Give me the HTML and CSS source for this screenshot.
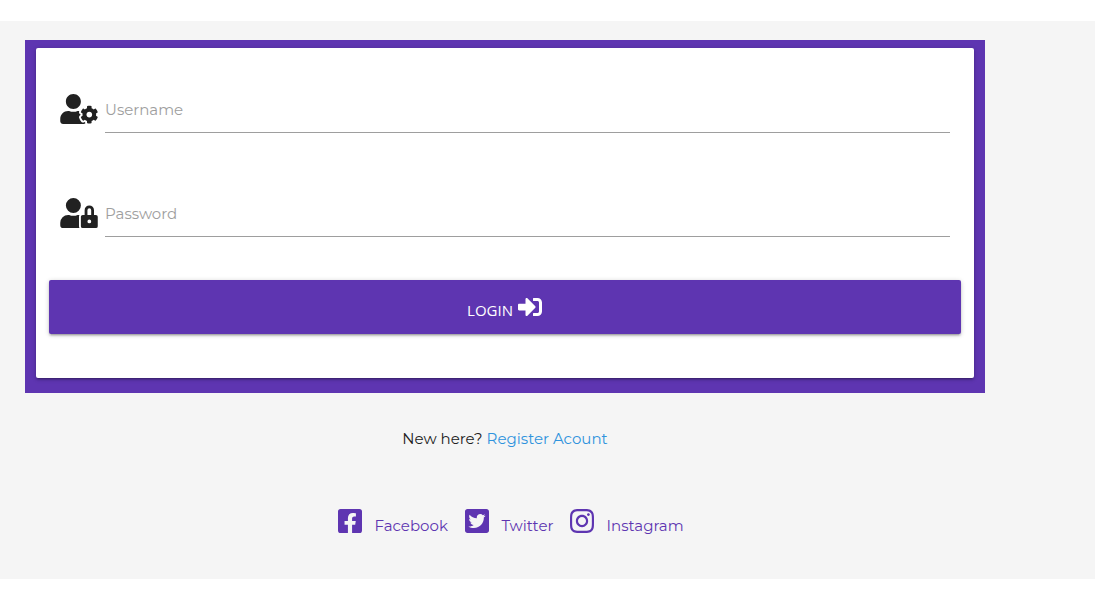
FILE: index.html
```html
<!DOCTYPE html>
<html lang="en">
<head>
<meta charset="utf-8">
<title>Login</title>
<link rel="stylesheet" href="styles.css">
</head>
<body>
<main class="page">
  <div class="content">
    <div class="frame">
      <form class="card">
        <div class="field">
          <svg class="field-icon" viewBox="0 0 640 512"><path d="M610.5 373.3c2.6-14.1 2.6-28.5 0-42.6l25.8-14.9c3-1.7 4.3-5.2 3.3-8.5-6.7-21.6-18.2-41.2-33.2-57.4-2.3-2.5-6-3.1-9-1.4l-25.8 14.9c-10.9-9.3-23.4-16.5-36.9-21.3v-29.8c0-3.4-2.4-6.4-5.7-7.1-22.3-5-45-4.8-66.2 0-3.3.7-5.7 3.7-5.7 7.1v29.8c-13.5 4.8-26 12-36.9 21.3l-25.8-14.9c-2.9-1.7-6.7-1.1-9 1.4-15 16.2-26.5 35.8-33.2 57.4-1 3.3.4 6.8 3.3 8.5l25.8 14.9c-2.6 14.1-2.6 28.5 0 42.6l-25.8 14.9c-3 1.7-4.3 5.2-3.3 8.5 6.7 21.6 18.2 41.1 33.2 57.4 2.3 2.5 6 3.1 9 1.4l25.8-14.9c10.9 9.3 23.4 16.5 36.9 21.3v29.8c0 3.4 2.4 6.4 5.7 7.1 22.3 5 45 4.8 66.2 0 3.3-.7 5.7-3.7 5.7-7.1v-29.8c13.5-4.8 26-12 36.9-21.3l25.8 14.9c2.9 1.7 6.7 1.1 9-1.4 15-16.2 26.5-35.8 33.2-57.4 1-3.3-.4-6.8-3.3-8.5l-25.8-14.9zM496 400.5c-26.8 0-48.5-21.8-48.5-48.5s21.8-48.5 48.5-48.5 48.5 21.8 48.5 48.5-21.7 48.5-48.5 48.5zM224 256c70.7 0 128-57.3 128-128S294.7 0 224 0 96 57.3 96 128s57.3 128 128 128zm201.2 226.5c-2.3-1.2-4.6-2.6-6.8-3.9l-7.9 4.6c-6 3.4-12.8 5.3-19.6 5.3-10.9 0-21.4-4.6-28.9-12.6-18.3-19.8-32.3-43.9-40.2-69.6-5.5-17.7 1.9-36.4 17.9-45.7l7.9-4.6c-.1-2.6-.1-5.2 0-7.8l-7.9-4.6c-16-9.2-23.4-28-17.9-45.7.9-2.9 2.2-5.8 3.2-8.7-3.8-.3-7.5-1.2-11.4-1.2h-16.7c-22.2 10.2-46.9 16-72.9 16s-50.6-5.8-72.9-16h-16.7C60.2 288 0 348.2 0 422.4V464c0 26.5 21.5 48 48 48h352c10.1 0 19.5-3.2 27.2-8.5-1.2-3.8-2-7.7-2-11.8v-9.2z"/></svg>
          <input class="field-input" type="text" placeholder="Username">
        </div>
        <div class="field">
          <svg class="field-icon" viewBox="0 0 640 512"><path d="M224 256A128 128 0 1 0 96 128a128 128 0 0 0 128 128zm96 64a63.08 63.08 0 0 1 8.1-30.5c-4.8-.5-9.5-1.5-14.5-1.5h-16.7a174.08 174.08 0 0 1-145.8 0h-16.7A134.43 134.43 0 0 0 0 422.4V464a48 48 0 0 0 48 48h280.9a63.54 63.54 0 0 1-8.9-32zm288-32h-32v-80a80 80 0 0 0-160 0v80h-32a32 32 0 0 0-32 32v160a32 32 0 0 0 32 32h224a32 32 0 0 0 32-32V320a32 32 0 0 0-32-32zM496 432a32 32 0 1 1 32-32 32 32 0 0 1-32 32zm32-144h-64v-80a32 32 0 0 1 64 0z"/></svg>
          <input class="field-input" type="password" placeholder="Password">
        </div>
        <button class="login" type="button">
          <span class="login-label">LOGIN</span>
          <svg class="login-icon" viewBox="0 0 512 512"><path d="M416 448h-84c-6.6 0-12-5.4-12-12v-40c0-6.6 5.4-12 12-12h84c17.7 0 32-14.3 32-32V160c0-17.7-14.3-32-32-32h-84c-6.6 0-12-5.4-12-12V76c0-6.6 5.4-12 12-12h84c53 0 96 43 96 96v192c0 53-43 96-96 96zm-47-209L201 71c-15-15-41-4.5-41 17v96H24c-13.3 0-24 10.7-24 24v96c0 13.3 10.7 24 24 24h136v96c0 21.5 26 32 41 17l168-168c9.3-9.4 9.3-24.6 0-34z"/></svg>
        </button>
      </form>
    </div>
    <p class="register"><span class="prompt">New here?</span><a class="register-link">Register Acount</a></p>
    <nav class="social">
      <a class="social-link facebook">
        <svg class="social-icon" viewBox="0 32 448 448"><path d="M400 32H48A48 48 0 0 0 0 80v352a48 48 0 0 0 48 48h137.25V327.69h-63V256h63v-54.64c0-62.15 37-96.48 93.67-96.48 27.14 0 55.52 4.84 55.52 4.84v61h-31.27c-30.81 0-40.42 19.12-40.42 38.73V256h68.78l-11 71.69h-57.78V480H400a48 48 0 0 0 48-48V80a48 48 0 0 0-48-48z"/></svg>
        <span class="social-label">Facebook</span>
      </a>
      <a class="social-link twitter">
        <svg class="social-icon" viewBox="0 32 448 448"><path d="M400 32H48C21.5 32 0 53.5 0 80v352c0 26.5 21.5 48 48 48h352c26.5 0 48-21.5 48-48V80c0-26.5-21.5-48-48-48zm-48.9 158.8c.2 2.8.2 5.7.2 8.5 0 86.7-66 186.6-186.6 186.6-37.2 0-71.7-10.8-100.7-29.4 5.3.6 10.4.8 15.8.8 30.7 0 58.9-10.4 81.4-28-28.8-.6-53-19.5-61.3-45.5 10.1 1.5 19.2 1.5 29.6-1.2-30-6.1-52.5-32.5-52.5-64.4v-.8c8.7 4.9 18.9 7.9 29.6 8.3a65.447 65.447 0 0 1-29.2-54.6c0-12.2 3.2-23.4 8.9-33.1 32.3 39.8 80.8 65.8 135.2 68.6-9.3-44.5 24-80.6 64-80.6 18.9 0 35.9 7.9 47.9 20.7 14.8-2.8 29-8.3 41.6-15.8-4.9 15.2-15.2 28-28.8 36.1 13.2-1.4 26-5.1 37.8-10.2-8.9 13.1-20.1 24.7-32.9 34z"/></svg>
        <span class="social-label">Twitter</span>
      </a>
      <a class="social-link instagram">
        <svg class="social-icon" viewBox="0 32 448 448"><path d="M224.1 141c-63.6 0-114.9 51.3-114.9 114.9s51.3 114.9 114.9 114.9S339 319.5 339 255.9 287.7 141 224.1 141zm0 189.6c-41.1 0-74.7-33.5-74.7-74.7s33.5-74.7 74.7-74.7 74.7 33.5 74.7 74.7-33.6 74.7-74.7 74.7zm146.4-194.3c0 14.9-12 26.8-26.8 26.8-14.9 0-26.8-12-26.8-26.8s12-26.8 26.8-26.8 26.8 12 26.8 26.8zm76.1 27.2c-1.7-35.9-9.9-67.7-36.2-93.9-26.2-26.2-58-34.4-93.9-36.2-37-2.1-147.9-2.1-184.9 0-35.8 1.7-67.6 9.9-93.9 36.1s-34.4 58-36.2 93.9c-2.1 37-2.1 147.9 0 184.9 1.7 35.9 9.9 67.7 36.2 93.9s58 34.4 93.9 36.2c37 2.1 147.9 2.1 184.9 0 35.9-1.7 67.7-9.9 93.9-36.2 26.2-26.2 34.4-58 36.2-93.9 2.1-37 2.1-147.8 0-184.8zM398.8 388c-7.8 19.6-22.9 34.7-42.6 42.6-29.5 11.7-99.5 9-132.1 9s-102.7 2.6-132.1-9c-19.6-7.8-34.7-22.9-42.6-42.6-11.7-29.5-9-99.5-9-132.1s-2.6-102.7 9-132.1c7.8-19.6 22.9-34.7 42.6-42.6 29.5-11.7 99.5-9 132.1-9s102.7-2.6 132.1 9c19.6 7.8 34.7 22.9 42.6 42.6 11.7 29.5 9 99.5 9 132.1s2.7 102.7-9 132.1z"/></svg>
        <span class="social-label">Instagram</span>
      </a>
    </nav>
  </div>
</main>
</body>
</html>
```
FILE: styles.css
```css
* {
  box-sizing: border-box;
}

body {
  margin: 0;
  padding-top: 21px;
  background: #fff;
  font-family: Montserrat, Inter, sans-serif;
  font-size: 15px;
  font-weight: 400;
  color: #212121;
}

.page {
  height: 558px;
  padding: 19px 0 0 25px;
  background: #f5f5f5;
}

.content {
  width: 960px;
}

.frame {
  height: 353px;
  padding: 8px 11px 15px;
  background: #5e35b1;
}

.card {
  height: 330px;
  padding: 40px 13px 0;
  background: #fff;
  border-radius: 2px;
  box-shadow: 0 2px 2px rgba(0, 0, 0, .14), 0 3px 1px -2px rgba(0, 0, 0, .12), 0 1px 5px rgba(0, 0, 0, .2);
}

.field {
  display: flex;
  height: 45px;
  margin: 0 11px 59px;
}

.field-icon {
  width: 38px;
  height: 30px;
  margin: 6px 7px 0 0;
  fill: #212121;
}

.field-input {
  flex: 1;
  height: 45px;
  padding: 0 0 2px;
  border: 0;
  border-bottom: 1px solid #9e9e9e;
  background: transparent;
  font: inherit;
  outline: none;
}

.field-input::placeholder {
  color: #9e9e9e;
  opacity: 1;
}

.login {
  display: flex;
  justify-content: center;
  align-items: center;
  gap: 5px;
  width: 100%;
  height: 54px;
  margin-top: -16px;
  padding: 0 1px 0 0;
  border: 0;
  border-radius: 2px;
  background: #5e35b1;
  color: #fff;
  box-shadow: 0 2px 2px rgba(0, 0, 0, .14), 0 3px 1px -2px rgba(0, 0, 0, .12), 0 1px 5px rgba(0, 0, 0, .2);
}

.login-label {
  padding-top: 6px;
  font: 400 15px/20px "Open Sans", "Noto Sans", sans-serif;
}

.login-icon {
  width: 24px;
  height: 24px;
  fill: currentColor;
}

.register {
  display: flex;
  justify-content: center;
  gap: 4px;
  margin: 36px 0 0;
  line-height: 20px;
}

.register-link {
  color: #2f93dd;
}

.social {
  display: flex;
  margin: 60px 0 0 313px;
  color: #5e35b1;
}

.social-link {
  display: flex;
  gap: 12.5px;
  height: 26px;
}

.facebook {
  width: 127px;
}

.twitter {
  width: 105px;
}

.social-icon {
  width: 24px;
  height: 24px;
  fill: currentColor;
}

.social-label {
  padding-top: 7px;
  line-height: 20px;
}
```
